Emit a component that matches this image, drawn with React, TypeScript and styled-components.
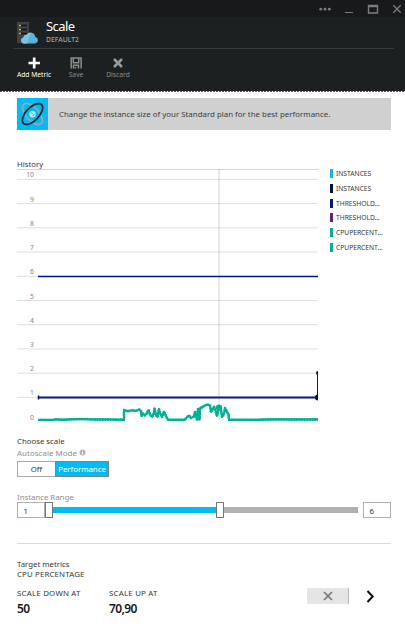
import React from "react";
import styled, { createGlobalStyle } from "styled-components";

const GlobalStyle = createGlobalStyle`
  * { box-sizing: border-box; }
  body { margin: 0; background: #fff; font-family: "Noto Sans", "Open Sans", sans-serif; }
`;

const Blade = styled.div`
  width: 405px;
  height: 631px;
  overflow: hidden;
  background: #fff;
  color: #2b2f33;
`;

const WindowBar = styled.div`
  height: 17px;
  background: #17191a;
  display: flex;
  justify-content: flex-end;
`;

const Header = styled.header`
  height: 75px;
  background:
    repeating-linear-gradient(90deg, #55585a 0 2px, #f4f4f4 2px 3px) left bottom / 100% 1px no-repeat,
    #1c2021;
`;

const TitleRow = styled.div`
  height: 32px;
  margin-left: 13px;
  width: 381px;
  border-bottom: 1px solid #36393a;
  display: flex;
  padding: 5px 0 0 4px;
  gap: 8px;
`;

const Titles = styled.div`
  display: flex;
  flex-direction: column;
  margin-top: -5px;
`;

const Text = styled.span<{ $size: number; $line: number; $color?: string; $track?: number; $weight?: number }>`
  display: block;
  white-space: nowrap;
  font-size: ${(p) => p.$size}px;
  line-height: ${(p) => p.$line}px;
  color: ${(p) => p.$color ?? "#34383c"};
  letter-spacing: ${(p) => p.$track ?? 0}px;
  font-weight: ${(p) => p.$weight ?? 400};
`;

const Commands = styled.div`
  display: flex;
  padding: 8px 0 0 13px;
`;

const Command = styled.button`
  width: 42px;
  padding: 0;
  border: 0;
  background: none;
  font-family: inherit;
  display: flex;
  flex-direction: column;
  align-items: center;
`;

const Body = styled.main`
  padding: 6px 14px 0 17px;
`;

const Banner = styled.div`
  height: 32px;
  background: #cfd0cf;
  display: flex;
  align-items: center;
  gap: 11px;
`;

const BannerIcon = styled.div`
  width: 31px;
  height: 32px;
  background: #00bcf2;
`;

const History = styled.section`
  padding-top: 29px;
  height: 305px;
`;

const HistoryTitle = styled.div`
  height: 10px;
`;

const ChartRow = styled.div`
  display: flex;
  gap: 8px;
`;

const ChartSvg = styled.svg`
  display: block;
`;

const Legend = styled.ul`
  list-style: none;
  margin: 0;
  padding: 0;
`;

const LegendItem = styled.li<{ $color: string }>`
  height: 14.8px;
  display: flex;
  gap: 3px;
  &::before {
    content: "";
    width: 3px;
    height: 9px;
    background: ${(p) => p.$color};
  }
`;

const Segmented = styled.div`
  display: flex;
  margin-top: 2px;
  height: 16px;
`;

const Segment = styled.button<{ $on?: boolean; $w: number }>`
  width: ${(p) => p.$w}px;
  height: 16px;
  padding: 0;
  border: 1px solid ${(p) => (p.$on ? "#7d8487" : "#a8a8a8")};
  border-right-width: ${(p) => (p.$on ? 1 : 0)}px;
  background: ${(p) => (p.$on ? "#00bcf2" : "#fff")};
  font-family: inherit;
  display: flex;
  justify-content: center;
`;

const ModeLabel = styled.div`
  display: flex;
  align-items: center;
  gap: 2px;
`;

const RangeTitle = styled.div`
  padding-top: 15px;
  height: 25px;
`;

const RangeRow = styled.div`
  display: flex;
  align-items: center;
  height: 16px;
`;

const NumberBox = styled.div<{ $end?: boolean }>`
  width: 28px;
  height: 16px;
  margin-left: ${(p) => (p.$end ? "auto" : "0")};
  border: 1px solid #b0b0b0;
  padding: 1px 0 0 5.5px;
`;

const Track = styled.div<{ $w: number; $on?: boolean }>`
  width: ${(p) => p.$w}px;
  height: 6px;
  background: ${(p) => (p.$on ? "#00bcf2" : "#b1b1b1")};
`;

const Thumb = styled.div`
  width: 8px;
  height: 16px;
  border: 1px solid #777;
  background: #fff;
`;

const Divider = styled.hr`
  border: 0;
  height: 1px;
  margin: 25px 0 15px;
  background: #dcdcdc;
`;

const MetricRow = styled.div`
  display: flex;
  margin-top: 8px;
`;

const Metric = styled.div<{ $w: number }>`
  width: ${(p) => p.$w}px;
`;

const RemoveButton = styled.button`
  width: 42px;
  height: 16px;
  margin: 0 17px 0 0;
  padding: 0;
  border: 0;
  border-right: 1px solid #b8b8b8;
  background: #e5e5e5;
  display: flex;
  align-items: center;
  justify-content: center;
`;

const Actions = styled.div`
  display: flex;
  align-items: center;
  height: 16px;
  margin-top: 1px;
`;

const legend = [
  ["INSTANCES", "#00bcf2"],
  ["INSTANCES", "#00104a"],
  ["THRESHOLD...", "#00188f"],
  ["THRESHOLD...", "#68217a"],
  ["CPUPERCENT...", "#00b294"],
  ["CPUPERCENT...", "#00b294"],
];

const gridY = (value: number) => 252.6 - value * 24.22;

const cpuLine =
  "21,251 36,251 38,250.3 46,250.8 55,250.3 66,250 76,250.5 92,250.5 107,250.8 107,241 111,242.3 115,241.3 119,242 122,240.5 124,242 124.5,247 126,244.5 128,246.5 130,244 131.5,241 133,245.5 135,248 137,244 137.5,239.5 139,246 140.5,248 142,240 143,244 145,248 147,242.5 149,247 151,250.8 168,250.8 170,248 172,246.5 174,249 177,247.5 178,243 180,250.5 181,240 182.5,250.5 183,239 185,238.5 187,237 190,235.5 193,236.5 194,243 195.5,241 197,237.5 198.5,241.5 200,247 202,238 204,241 205,248 207,245 208,239 210,243 211.5,245 212,250.8 240,250.8 251,250.5 264,250.3 275,250.5 290,250.5 301,250.5";

function Chart() {
  return (
    <ChartSvg width="305" height="256" viewBox="0 0 305 256">
      <path d="M0 .5H301" stroke="#d5d5d5" />
      {[10, 9, 8, 7, 6, 5, 4, 3, 2, 1].map((v) => (
        <path key={v} d={`M0 ${gridY(v)}H301`} stroke="#dedede" />
      ))}
      {[10, 9, 8, 7, 6, 5, 4, 3, 2, 1, 0].map((v) => (
        <text key={v} x="17" y={gridY(v) - 2} textAnchor="end" fontSize="6.8" fill="#858585">
          {v}
        </text>
      ))}
      <path d="M202 0V251" stroke="#000" strokeOpacity=".11" strokeWidth="1.6" />
      <path d="M21 107.4H301" stroke="#00188f" strokeWidth="1.5" />
      <path d="M21 228.5H301" stroke="#5361a1" strokeWidth="2.4" />
      <path d="M21 228.5H301" stroke="#35145f" strokeWidth="1.1" />
      <path d="M21.5 226.5v4" stroke="#00104a" strokeWidth="1.5" />
      <path d="M300.5 204V228" stroke="#002060" />
      <path d="M301 202a2 2 0 0 0 0 4zM301 225.5a3 3 0 0 0 0 6z" fill="#00104a" />
      <g clipPath="url(#plot)">
        <polyline points={cpuLine} fill="none" stroke="#00b294" strokeWidth="1.9" strokeLinejoin="round" />
        <polyline points={cpuLine} fill="none" stroke="#00b294" strokeWidth="2.8" strokeLinecap="round" strokeDasharray="0 2.6" />
      </g>
      <clipPath id="plot">
        <path d="M21 0H301V252H21z" />
      </clipPath>
      <circle cx="202" cy="238.6" r="3.2" fill="#00b294" />
    </ChartSvg>
  );
}

export default function App() {
  return (
    <Blade>
      <GlobalStyle />
      <WindowBar>
        <svg width="95" height="17" fill="none" stroke="#7b7d7e">
          <g fill="#7b7d7e" stroke="none">
            <circle cx="10.7" cy="9.2" r="1.4" />
            <circle cx="15" cy="9.2" r="1.4" />
            <circle cx="19.3" cy="9.2" r="1.4" />
          </g>
          <path d="M35 12.5h8" />
          <path d="M58.5 5.5h9v7.5h-9zM58 6.5h10" strokeWidth="1.4" />
          <path d="M83.3 5.3l7.4 7.4M90.7 5.3l-7.4 7.4" strokeWidth="1.3" />
        </svg>
      </WindowBar>
      <Header>
        <TitleRow>
          <svg width="21" height="23" viewBox="0 0 21 23">
            <path d="M0 0h12v21H0z" fill="#3e4041" />
            <path d="M2 3.5h8M2 7.5h8M2 11.5h8" stroke="#111314" strokeWidth="1.6" />
            <path d="M2 3.5h2M2 7.5h2M2 11.5h2" stroke="#b8c72d" strokeWidth="1.4" />
            <path d="M7 21.5a3.1 3.1 0 0 1-.6-6.1 3 3 0 0 1 3.2-2.6 4.7 4.7 0 0 1 8.7 2.1 3.4 3.4 0 0 1 .1 6.6z" fill="#59b4d9" />
            <path d="M7 21.5a3.1 3.1 0 0 1-.6-6.1 3 3 0 0 1 3.2-2.6 4.7 4.7 0 0 1 4.5-2.1L10.3 21.5z" fill="#7ac3e1" />
          </svg>
          <Titles>
            <Text $size={13} $line={19} $color="#fff" $track={-0.55}>Scale</Text>
            <Text $size={6.8} $line={8} $color="#a0a2a3" $weight={500}>DEFAULT2</Text>
          </Titles>
        </TitleRow>
        <Commands>
          <Command>
            <svg width="12" height="12"><path d="M6.2.5v11M.5 6h11.4" stroke="#fff" strokeWidth="2.7" /></svg>
            <Text $size={6.7} $line={12} $color="#fff">Add Metric</Text>
          </Command>
          <Command>
            <svg width="12" height="12" fill="none" stroke="#8b8d8e" strokeWidth="1.5">
              <path d="M1.2 11.5V.9h9.9v10.6M3.3 1v4.7h5.4V1M3.5 11.5V8.3h5v3.2M5.5 10v1.5" />
            </svg>
            <Text $size={6.7} $line={12} $color="#8b8d8e">Save</Text>
          </Command>
          <Command>
            <svg width="12" height="12"><path d="M2 2l8 8M10 2l-8 8" stroke="#97999a" strokeWidth="2.6" /></svg>
            <Text $size={6.7} $line={12} $color="#8b8d8e">Discard</Text>
          </Command>
        </Commands>
      </Header>
      <Body>
        <Banner>
          <BannerIcon>
            <svg width="31" height="32" viewBox="0 0 31 32" fill="none">
              <ellipse cx="15.5" cy="16" rx="13" ry="6.5" transform="rotate(48 15.5 16)" stroke="#8caab7" strokeWidth="1.8" />
              <ellipse cx="15.5" cy="16" rx="13" ry="6.5" transform="rotate(-46 15.5 16)" stroke="#092730" strokeWidth="1.8" />
              <circle cx="15.5" cy="16.2" r="3.2" fill="#b9ecfb" />
              <path d="M13.8 14.3l1.5 1.5M15.5 18l2-2" stroke="#20a8d0" />
            </svg>
          </BannerIcon>
          <Text $size={7.88} $line={16} $color="#3c3f42">Change the instance size of your Standard plan for the best performance.</Text>
        </Banner>
        <History>
          <HistoryTitle>
            <Text $size={7.8} $line={11}>History</Text>
          </HistoryTitle>
          <ChartRow>
            <Chart />
            <Legend>
              {legend.map(([name, color], i) => (
                <LegendItem key={i} $color={color}>
                  <Text $size={6.7} $line={9}>{name}</Text>
                </LegendItem>
              ))}
            </Legend>
          </ChartRow>
        </History>
        <Text $size={7.8} $line={12}>Choose scale</Text>
        <ModeLabel>
          <Text $size={7.9} $line={12} $color="#8d8d8d" $track={0.05}>Autoscale Mode</Text>
          <svg width="7" height="8"><circle cx="3.5" cy="3.5" r="3" fill="#b4b4b4" /><path d="M3.5 3v2.3M3.5 1.5v.8" stroke="#fff" /></svg>
        </ModeLabel>
        <Segmented>
          <Segment $w={38}><Text $size={7.8} $line={14}>Off</Text></Segment>
          <Segment $w={54} $on><Text $size={7.8} $line={14} $color="#fff">Performance</Text></Segment>
        </Segmented>
        <RangeTitle>
          <Text $size={7.8} $line={11} $color="#8d8d8d">Instance Range</Text>
        </RangeTitle>
        <RangeRow>
          <NumberBox><Text $size={7.8} $line={14}>1</Text></NumberBox>
          <Thumb />
          <Track $w={163} $on />
          <Thumb />
          <Track $w={134} />
          <NumberBox $end><Text $size={7.8} $line={14}>6</Text></NumberBox>
        </RangeRow>
        <Divider />
        <Text $size={7.8} $line={10}>Target metrics</Text>
        <Text $size={7.9} $line={10} $track={0.12}>CPU PERCENTAGE</Text>
        <MetricRow>
          <Metric $w={92}>
            <Text $size={7.9} $line={12} $track={0.2}>SCALE DOWN AT</Text>
            <Text $size={12} $line={19} $color="#15191c" $weight={600} $track={-0.6}>50</Text>
          </Metric>
          <Metric $w={198}>
            <Text $size={7.9} $line={12} $track={0.2}>SCALE UP AT</Text>
            <Text $size={12} $line={19} $color="#15191c" $weight={600} $track={-0.6}>70,90</Text>
          </Metric>
          <Actions>
            <RemoveButton>
              <svg width="10" height="10"><path d="M1 1l8 8M9 1L1 9" stroke="#777" strokeWidth="1.7" /></svg>
            </RemoveButton>
            <svg width="9" height="13"><path d="M1.5 1l5.2 5.5L1.5 12" fill="none" stroke="#111" strokeWidth="2" /></svg>
          </Actions>
        </MetricRow>
      </Body>
    </Blade>
  );
}
